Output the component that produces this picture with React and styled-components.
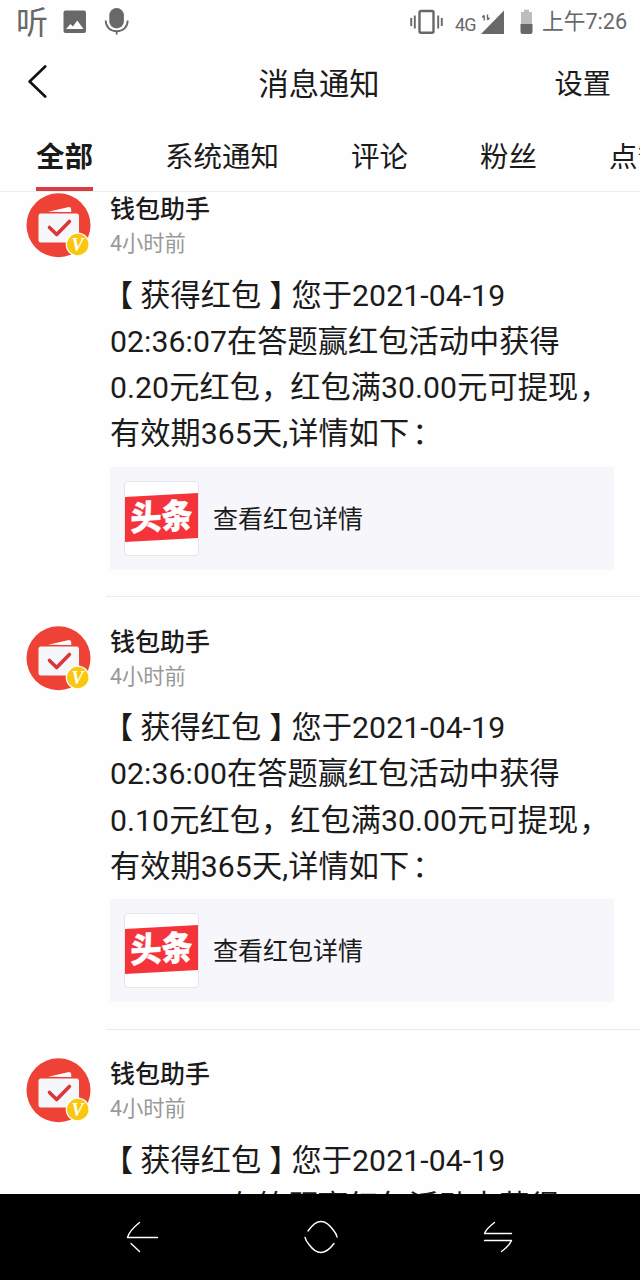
import React from "react";
import styled, { createGlobalStyle } from "styled-components";

const Global = createGlobalStyle`
  * { box-sizing: border-box; }
  body {
    margin: 0;
    background: #fefefe;
    color: #1b1b1b;
    font-family: Roboto, "Noto Sans CJK SC", sans-serif;
    text-spacing-trim: space-all;
  }
`;

const Screen = styled.div`
  width: 640px;
  height: 1280px;
  display: flex;
  flex-direction: column;
  overflow: hidden;
`;

const StatusBar = styled.div`
  flex: none;
  height: 44px;
  padding: 0 14px 0 16px;
  display: flex;
  align-items: center;
  justify-content: space-between;
  color: #686868;
  svg { display: block; }
`;

const StatusGroup = styled.div`
  height: 44px;
  display: flex;
  align-items: center;
`;

const ListenMark = styled.span`
  width: 32px;
  font-size: 32px;
  line-height: 44px;
  padding-top: 1px;
  font-weight: 400;
  margin-right: 15px;
`;

const Network = styled.span`
  font-size: 18px;
  line-height: 20px;
  margin: 6px 4px 0 12px;
  width: 21px;
  letter-spacing: -0.8px;
`;

const Clock = styled.span`
  width: 84px;
  margin-left: 9px;
  font-size: 21.7px;
  line-height: 44px;
  white-space: nowrap;
`;

const TitleBar = styled.header`
  flex: none;
  height: 78px;
  padding: 0 29px 0 27px;
  display: grid;
  grid-template-columns: 1fr auto 1fr;
  align-items: center;
`;

const Title = styled.h1`
  margin: 0;
  padding-top: 3px;
  font-size: 30.3px;
  line-height: 40px;
  font-weight: 400;
`;

const Settings = styled.button`
  justify-self: end;
  border: 0;
  padding: 3px 0 0;
  background: none;
  color: inherit;
  font: inherit;
  font-size: 28.3px;
  line-height: 40px;
`;

const Tabs = styled.nav`
  flex: none;
  height: 70px;
  padding-left: 36px;
  display: flex;
  gap: 72px;
  overflow: hidden;
  border-bottom: 1px solid #ededed;
`;

const Tab = styled.div`
  flex: none;
  height: 70px;
  font-size: 28.5px;
  line-height: 72px;
  white-space: nowrap;
  font-weight: ${(p) => (p.$active ? 700 : 400)};
  box-shadow: ${(p) => (p.$active ? "inset 0 -5px #d63c42" : "none")};
`;

const Feed = styled.main`
  flex: 1;
  min-height: 0;
  overflow: hidden;
`;

const Item = styled.article`
  height: 432.6px;
  padding-left: 26px;
  display: flex;
`;

const Avatar = styled.div`
  flex: none;
  width: 80px;
  padding-top: 1px;
  svg { display: block; }
`;

const Content = styled.div`
  flex: 1;
  height: 405px;
  padding: 1px 26px 0 4px;
  border-bottom: 1px solid #ebebeb;
`;

const Name = styled.div`
  font-size: 25px;
  line-height: 34px;
  font-weight: 500;
`;

const Time = styled.div`
  font-size: 21.3px;
  line-height: 34px;
  color: #999;
`;

const Message = styled.p`
  margin: 11.5px 0 0;
  font-size: 30.2px;
  line-height: 46.3px;
  letter-spacing: 0.07px;
  white-space: nowrap;
`;

const Punct = styled.span`
  margin-left: ${(p) => p.$shift}px;
  margin-right: ${(p) => -p.$shift}px;
`;

const Card = styled.div`
  width: 504px;
  height: 103px;
  margin-top: 9px;
  padding-left: 14px;
  display: flex;
  align-items: center;
  gap: 14px;
  background: #f7f6fa;
`;

const CardLabel = styled.span`
  padding-bottom: 3px;
  font-size: 25px;
`;

const Logo = styled.div`
  width: 75px;
  height: 75px;
  padding-bottom: 2px;
  border: 1px solid #e6e6ea;
  border-radius: 4px;
  background: #fff;
  overflow: hidden;
  display: flex;
  align-items: center;
`;

const LogoBand = styled.div`
  width: 73px;
  height: 45px;
  background: #f5333b;
  color: #fff;
  font-size: 31px;
  line-height: 45px;
  font-weight: 900;
  text-align: center;
  -webkit-text-stroke: 0.5px #fff;
  transform: skewY(-3deg);
`;

const LogoText = styled.span`
  display: inline-block;
  transform: scaleY(1.1);
`;

const NavBar = styled.footer`
  flex: none;
  height: 86px;
  padding: 0 124px 0 125px;
  display: flex;
  align-items: center;
  justify-content: space-between;
  background: #000;
`;

const NavIcon = styled.svg`
  width: 36px;
  height: 36px;
  fill: none;
  stroke: #fff;
  stroke-width: 1.4;
  stroke-linecap: round;
  stroke-linejoin: round;
`;

const WalletAvatar = () => (
  <svg width="66" height="66" viewBox="0 0 66 66">
    <circle cx="32.5" cy="32.3" r="32" fill="#ee4237" />
    <path d="M22 18.8 42 14.2q3-.5 3.2 2.2V19Z" fill="#fff" />
    <rect x="12.5" y="20.5" width="40.5" height="29" rx="2.5" fill="#f6f7fa" />
    <path d="m23.500 34.500 7.200 7 12.700-13" fill="none" stroke="#d9373b" strokeWidth="3.6" strokeLinecap="round" strokeLinejoin="round" />
    <circle cx="51.700" cy="51.500" r="12" fill="#fff" />
    <circle cx="51.700" cy="51.500" r="10.700" fill="#f9c80e" />
    <text x="51.500" y="57.600" textAnchor="middle" fontFamily="Liberation Serif, serif" fontStyle="italic" fontWeight="700" fontSize="18" fill="#fff">V</text>
  </svg>
);

const messages = [
  { at: "02:36:07", amount: "0.20" },
  { at: "02:36:00", amount: "0.10" },
  { at: "02:35:52", amount: "0.10" },
];

const Notification = ({ at, amount }) => (
  <Item>
    <Avatar><WalletAvatar /></Avatar>
    <Content>
      <Name>钱包助手</Name>
      <Time>4小时前</Time>
      <Message>
        <Punct $shift={-7}>【</Punct>获得红包<Punct $shift={8}>】</Punct>您于2021-04-19<br />
        {at}在答题赢红包活动中获得<br />
        {amount}元红包<Punct $shift={1}>，</Punct>红包满30.00元可提现<Punct $shift={1}>，</Punct><br />
        有效期365天,详情如下<Punct $shift={3}>：</Punct>
      </Message>
      <Card>
        <Logo><LogoBand><LogoText>头条</LogoText></LogoBand></Logo>
        <CardLabel>查看红包详情</CardLabel>
      </Card>
    </Content>
  </Item>
);

export default function App() {
  return (
    <Screen>
      <Global />
      <StatusBar>
        <StatusGroup>
          <ListenMark>听</ListenMark>
          <svg width="24" height="24" viewBox="0 0 24 24">
            <rect x=".5" y=".5" width="22.5" height="22.5" rx="2" fill="#686868" />
            <path d="m3 19 4.500-5 2.300 2.500 4.500-6L20.500 19Z" fill="#fff" />
          </svg>
          <svg width="26" height="30" viewBox="0 0 26 30" style={{ marginLeft: 17 }}>
            <rect x="5.3" y="1" width="14.6" height="20.5" rx="7.3" fill="#686868" />
            <path d="M1.700 13.500c0 6.500 4.700 10.700 11 10.700s11-4.200 11-10.700M12.700 24v3.500" fill="none" stroke="#686868" strokeWidth="1.8" />
          </svg>
        </StatusGroup>
        <StatusGroup>
          <svg width="33" height="26" viewBox="0 0 33 26" fill="none" stroke="#686868">
            <rect x="9.5" y="2" width="14" height="21.7" rx="1.5" strokeWidth="2.4" />
            <path d="M1.200 9v8M4.800 6.500v13M28.200 6.500v13M31.800 9v8" strokeWidth="1.9" />
          </svg>
          <Network>4G</Network>
          <svg width="25" height="26" viewBox="0 0 25 26">
            <path d="M24 1.500V25H1Z" fill="#686868" />
            <path d="M4.200 11.500V6.500M2.200 8.500l2-2.300M7.500 5.500v5.300M9.500 8.700l-2 2.300" stroke="#686868" strokeWidth="1.4" fill="none" />
          </svg>
          <svg width="13" height="26" viewBox="0 0 13 26" style={{ marginLeft: 15 }}>
            <path d="M1 3h3V.8h5V3h3v13H1Z" fill="#bdbdbd" />
            <path d="M.5 15h12v8q0 2-2 2h-8q-2 0-2-2Z" fill="#686868" />
          </svg>
          <Clock>上午7:26</Clock>
        </StatusGroup>
      </StatusBar>
      <TitleBar>
        <svg width="22" height="36" viewBox="0 0 22 36" fill="none" stroke="#111" strokeWidth="2.6" strokeLinecap="round" strokeLinejoin="round">
          <path d="M18.200 1.500 2.600 16.500l15.600 15" />
        </svg>
        <Title>消息通知</Title>
        <Settings>设置</Settings>
      </TitleBar>
      <Tabs>
        <Tab $active>全部</Tab>
        <Tab>系统通知</Tab>
        <Tab>评论</Tab>
        <Tab>粉丝</Tab>
        <Tab>点赞</Tab>
      </Tabs>
      <Feed>
        {messages.map((m) => <Notification key={m.at} {...m} />)}
      </Feed>
      <NavBar>
        <NavIcon viewBox="0 0 36 36"><path d="M14.500 3.500Q4.500 11.500 2.500 18.500H32.500M6 24.500l8.500 8" /></NavIcon>
        <NavIcon viewBox="0 0 36 36"><path d="M5 12Q18-7 31 12 33.500 15 34 18M2 18.500Q3 22 6 25.500 18 42 31 24.500" /></NavIcon>
        <NavIcon viewBox="0 0 36 36"><path d="M14.500 3.500Q6.500 9.500 4.500 14.500H31.500M4.500 21.500H31.500Q29.500 26.500 21.500 32.500" /></NavIcon>
      </NavBar>
    </Screen>
  );
}
